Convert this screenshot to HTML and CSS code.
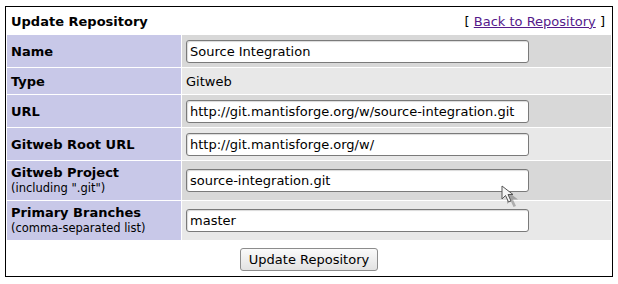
FILE: index.html
```html
<!DOCTYPE html>
<html lang="en">
<head>
    <meta charset="UTF-8">
    <title>Update Repository</title>
    <link rel="stylesheet" href="styles.css">
</head>
<body>
    <div class="page">
        <form class="repo-form" action="#" method="post">
            <table class="width50" cellspacing="1">
                <tr class="head">
                    <td class="form-title">Update Repository</td>
                    <td class="right">[ <a href="#">Back to Repository</a> ]</td>
                </tr>
                <tr class="row-1 tall">
                    <td class="category">Name</td>
                    <td><input type="text" class="field" value="Source Integration"></td>
                </tr>
                <tr class="row-2">
                    <td class="category">Type</td>
                    <td>Gitweb</td>
                </tr>
                <tr class="row-1 tall">
                    <td class="category">URL</td>
                    <td><input type="text" class="field" value="http://git.mantisforge.org/w/source-integration.git"></td>
                </tr>
                <tr class="row-2 tall">
                    <td class="category">Gitweb Root URL</td>
                    <td><input type="text" class="field" value="http://git.mantisforge.org/w/"></td>
                </tr>
                <tr class="row-1 double">
                    <td class="category">Gitweb Project<br><span class="small">(including ".git")</span></td>
                    <td><input type="text" class="field" value="source-integration.git"></td>
                </tr>
                <tr class="row-2 double">
                    <td class="category">Primary Branches<br><span class="small">(comma-separated list)</span></td>
                    <td><input type="text" class="field" value="master"></td>
                </tr>
                <tr class="foot">
                    <td class="center" colspan="2"><button type="button" class="button">Update Repository</button></td>
                </tr>
            </table>
        </form>

        <!-- mouse pointer from the screenshot -->
        <svg class="pointer" width="22" height="24" viewBox="0 0 22 24">
            <path d="M3 4 L3 17 L6.5 13.5 L9.5 20 L12 19 L9 12.5 L14 12.5 Z" fill="#000" opacity="0.25" transform="translate(3 2)"/>
            <path d="M1 1 L1 14 L4.5 10.5 L7.5 17 L10 16 L7 9.5 L12 9.5 Z" fill="#f4f4f4" stroke="#555" stroke-width="1" stroke-linejoin="round"/>
        </svg>
    </div>
</body>
</html>
```

FILE: styles.css
```css
* {
    box-sizing: border-box;
}

body {
    margin: 0;
    background: #fff;
    font-family: "DejaVu Sans", Verdana, sans-serif;
    font-size: 13px;
    color: #000;
}

.page {
    position: relative;
    padding: 6px 5px 0;
}

.repo-form {
    margin: 0;
}

table.width50 {
    width: 608px;
    border: 1px solid #000;
    border-collapse: separate;
    border-spacing: 1px;
}

td {
    padding: 0 4px;
    height: 26px;
    vertical-align: middle;
}

.head td {
    height: 26px;
}

.tall td {
    height: 32px;
}

.double td {
    height: 39px;
}

.foot td {
    height: 34px;
}

.form-title {
    font-weight: bold;
}

.right {
    text-align: right;
    padding-right: 6px;
}

.center {
    text-align: center;
}

a {
    color: #551a8b;
}

.row-1 {
    background: #d8d8d8;
}

.row-2 {
    background: #e8e8e8;
}

td.category {
    background: #c8c8e8;
    font-weight: bold;
    width: 174px;
    line-height: 15px;
}

.small {
    font-size: 11.5px;
    font-weight: normal;
}

.field {
    display: block;
    width: 343px;
    height: 23px;
    margin: 0;
    padding: 0 3px;
    font-family: "DejaVu Sans", Verdana, sans-serif;
    font-size: 13px;
    color: #000;
    background: #fff;
    border: 1px solid #7a7a7a;
    border-radius: 3px;
    box-shadow: inset 1px 1px 1px rgba(0, 0, 0, 0.15);
}

.button {
    width: 138px;
    height: 23px;
    margin-top: 2px;
    padding: 0;
    font-family: "DejaVu Sans", Verdana, sans-serif;
    font-size: 13px;
    color: #000;
    background: linear-gradient(#fafafa, #e2e2e2);
    border: 1px solid #8c8c8c;
    border-radius: 3px;
}

.pointer {
    position: absolute;
    left: 501px;
    top: 185px;
}
```
